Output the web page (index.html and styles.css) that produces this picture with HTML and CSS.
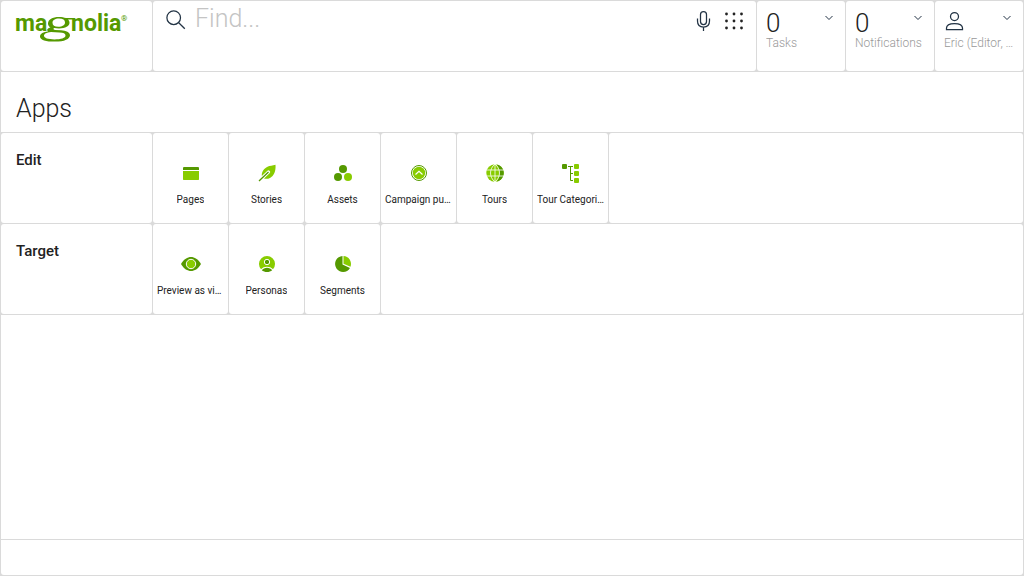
FILE: index.html
```html
<!DOCTYPE html>
<html lang="en">
<head>
<meta charset="utf-8">
<meta name="viewport" content="width=device-width, initial-scale=1">
<title>Magnolia</title>
<link rel="stylesheet" href="styles.css">
</head>
<body>
<div class="shell">
  <header class="topbar">
    <a class="cell logo" href="#" aria-label="Magnolia">
      <svg width="114" height="30" viewBox="0 0 114 30">
        <g class="logo-text">
          <text x="0" y="19">ma</text>
          <text x="56" y="19">nolia</text>
          <text class="logo-mark" x="106" y="9">®</text>
        </g>
        <path fill="#590" fill-rule="evenodd" d="M44 5c3 0 5 .5 7 1h7v1.500h-5c1 1 1.500 2 1.500 3.300 0 3.300-4 5.700-10.500 5.700-1.800 0-3.400-.2-4.700-.4-1.300.5-1.300 1.700.7 1.900l6 .2c5 .4 9 2.200 9 5 0 3.800-5.500 6.400-15 6.400-9 0-15-1.700-15-5.200 0-3 3.500-4.600 8-5-1.500-1.200-.8-3 2.500-3.800-1.600-1-2.500-2.300-2.500-4C33 7.500 37.500 5 44 5zM44 6.600c-4 0-6.500 1.600-6.500 4.200s2 4 5.800 4c4.200 0 6.700-1.600 6.700-4.200s-2-4-6-4zM36 20c-4.500.5-7 1.800-7 3.800 0 2.200 4 3.600 10.500 3.600 6.500 0 11-1.400 11-3.900 0-2-2-2.700-6-2.900z"/>
      </svg>
    </a>
    <form class="cell search" role="search">
      <svg class="icon-line" width="20" height="20" viewBox="0 0 20 20"><circle cx="7.700" cy="7.700" r="6.800"/><path d="M12.500 12.500l6.300 6.300"/></svg>
      <input class="search-input" type="text" placeholder="Find..." aria-label="Find">
      <button class="icon-button" type="button" aria-label="Voice search">
        <svg class="icon-line" width="16" height="22" viewBox="0 0 16 22"><rect x="4.500" y="1.500" width="6" height="13" rx="3"/><path d="M1.500 8.500v2.500c0 4 2.500 6 6 6s6-2 6-6V8.500M7.500 17v4"/></svg>
      </button>
      <button class="icon-button" type="button" aria-label="All apps">
        <svg width="20" height="20" viewBox="0 0 20 20" fill="#222"><circle cx="2.500" cy="3" r="1.400"/><circle cx="10" cy="3" r="1.400"/><circle cx="17.500" cy="3" r="1.400"/><circle cx="2.500" cy="10" r="1.400"/><circle cx="10" cy="10" r="1.400"/><circle cx="17.500" cy="10" r="1.400"/><circle cx="2.500" cy="17" r="1.400"/><circle cx="10" cy="17" r="1.400"/><circle cx="17.500" cy="17" r="1.400"/></svg>
      </button>
    </form>
    <button class="cell status" type="button">
      <span class="status-top"><span class="count">0</span><svg class="icon-line chevron" width="8" height="6" viewBox="0 0 8 6"><path d="M.5 1L4 4.500 7.500 1"/></svg></span>
      <span class="status-label">Tasks</span>
    </button>
    <button class="cell status" type="button">
      <span class="status-top"><span class="count">0</span><svg class="icon-line chevron" width="8" height="6" viewBox="0 0 8 6"><path d="M.5 1L4 4.500 7.500 1"/></svg></span>
      <span class="status-label">Notifications</span>
    </button>
    <button class="cell status" type="button">
      <span class="status-top"><svg class="icon-line user" width="20" height="20" viewBox="0 0 20 20"><circle cx="10.500" cy="5.500" r="4"/><path d="M2.500 18.500v-1.500c0-3 3.500-4.500 8-4.500s8 1.500 8 4.500v1.500z"/></svg><svg class="icon-line chevron" width="8" height="6" viewBox="0 0 8 6"><path d="M.5 1L4 4.500 7.500 1"/></svg></span>
      <span class="status-label">Eric (Editor, Publisher)</span>
    </button>
  </header>

  <h1 class="title">Apps</h1>

  <section class="group">
    <h2 class="cell group-name">Edit</h2>
    <a class="cell tile" href="#">
      <svg width="20" height="20" viewBox="0 0 20 20"><path fill="#590" d="M2.500 4h15l.5.500V7H2V4.500z"/><path fill="#8c0" d="M2 8h16v8.500l-.5.500h-15l-.5-.500z"/></svg>
      <span class="tile-name">Pages</span>
    </a>
    <a class="cell tile" href="#">
      <svg width="20" height="20" viewBox="0 0 20 20"><path fill="#8c0" d="M18.500 1.800C19 8 17 13 13 15c-3 1.500-6 .8-7.500-.2C3.500 11 6 6 10 4c3-1.500 5.500-1.200 8.500-2.200z"/><path fill="none" stroke="#fff" stroke-width="3.200" stroke-linecap="round" d="M2 18L11.500 9"/><path fill="none" stroke="#590" stroke-width="1.300" d="M2 18L11.500 9"/></svg>
      <span class="tile-name">Stories</span>
    </a>
    <a class="cell tile" href="#">
      <svg width="20" height="20" viewBox="0 0 20 20"><circle cx="10" cy="6" r="4" fill="#590"/><circle cx="5" cy="14" r="4" fill="#590"/><circle cx="15" cy="14" r="4" fill="#8c0"/></svg>
      <span class="tile-name">Assets</span>
    </a>
    <a class="cell tile" href="#">
      <svg width="20" height="20" viewBox="0 0 20 20"><circle cx="10" cy="10" r="7.500" fill="none" stroke="#590"/><circle cx="10" cy="10" r="6.200" fill="#8c0"/><path fill="none" stroke="#fff" stroke-width="1.200" d="M6.500 11.500L10 8.300l3.500 3.200"/></svg>
      <span class="tile-name">Campaign publisher</span>
    </a>
    <a class="cell tile" href="#">
      <svg width="20" height="20" viewBox="0 0 20 20"><circle cx="10" cy="10" r="8.700" fill="#8c0"/><path fill="#590" d="M12 1.500c9 2 9 15 0 17 3.500-5 3.500-12 0-17z"/><path fill="none" stroke="#fff" stroke-width=".8" d="M1 7h18M1 13h18M10 1v18M10 1C4 6 4 14 10 19M10 1c6 5 6 13 0 18"/></svg>
      <span class="tile-name">Tours</span>
    </a>
    <a class="cell tile" href="#">
      <svg width="20" height="20" viewBox="0 0 20 20"><rect x="1" y="1" width="5" height="5" rx="1" fill="#590"/><path fill="none" stroke="#590" d="M7 3.500h5M9.500 3.500v14H12M9.500 10.500H12"/><g fill="#8c0"><rect x="13" y="1" width="5" height="5" rx="1"/><rect x="13" y="8" width="5" height="5" rx="1"/><rect x="13" y="15" width="5" height="5" rx="1"/></g></svg>
      <span class="tile-name">Tour Categories</span>
    </a>
    <div class="cell filler"></div>
  </section>

  <section class="group">
    <h2 class="cell group-name">Target</h2>
    <a class="cell tile" href="#">
      <svg width="20" height="20" viewBox="0 0 20 20"><path fill="#590" d="M0 10c3-5 6.500-7 10-7s7 2 10 7c-3 5-6.500 7-10 7s-7-2-10-7z"/><circle cx="10" cy="10" r="4.700" fill="#8c0" stroke="#fff"/></svg>
      <span class="tile-name">Preview as visitor</span>
    </a>
    <a class="cell tile" href="#">
      <svg width="20" height="20" viewBox="0 0 20 20"><path fill="#8c0" d="M4 15.300a8 8 0 1 1 12 0C13 12 7 12 4 15.300z"/><path fill="#590" d="M4.800 16.200C7 12.800 13 12.800 15.200 16.200 12.500 18.600 7.500 18.600 4.800 16.200z"/><circle cx="10" cy="8" r="2.700" fill="#590" stroke="#fff"/></svg>
      <span class="tile-name">Personas</span>
    </a>
    <a class="cell tile" href="#">
      <svg width="20" height="20" viewBox="0 0 20 20"><path fill="#590" d="M9.500 2v8.500l7.500 3.500A8 8 0 1 1 9.500 2z"/><path fill="#8c0" d="M10.500 2a8 8 0 0 1 7 10.700l-7-3z"/></svg>
      <span class="tile-name">Segments</span>
    </a>
    <div class="cell filler"></div>
  </section>

  <main class="workspace"></main>
  <footer class="bottom"></footer>
</div>
</body>
</html>
```
FILE: styles.css
```css
* {
  box-sizing: border-box;
}

body {
  margin: 0;
  font-family: Roboto, "Liberation Sans", sans-serif;
  color: #222;
}

.shell {
  display: flex;
  flex-direction: column;
  gap: 1px;
  min-height: 100vh;
  padding: 1px;
  background: #dadada;
}

.cell {
  background: #fff;
  border: 0;
  border-radius: 3px;
}

.topbar {
  display: grid;
  grid-template-columns: 151px 1fr 88px 88px 88px;
  gap: 1px;
  min-height: 70px;
}

.logo {
  padding: 11px 14px;
}

.logo svg {
  display: block;
  overflow: visible;
}

.logo-text {
  fill: #590;
  font-size: 23px;
  font-weight: 700;
}

.logo-mark {
  font-size: 8px;
  font-weight: 400;
}

.icon-line {
  display: block;
  flex: none;
  fill: none;
  stroke: #234;
  stroke-width: 1.25;
}

.search {
  display: flex;
  align-items: flex-start;
  gap: 12px;
  padding: 9px 12px 9px 13px;
}

.search-input {
  flex: 1;
  min-width: 0;
  height: 30px;
  margin: -6px 0 0 -3px;
  padding: 0;
  border: 0;
  outline: 0;
  font: 300 25px/30px Roboto, "Liberation Sans", sans-serif;
}

.search-input::placeholder {
  color: #c4c4c4;
}

.icon-button {
  display: flex;
  align-items: center;
  height: 22px;
  padding: 0;
  border: 0;
  background: none;
}

.status {
  display: flex;
  flex-direction: column;
  min-width: 0;
  padding: 6px 8px 6px 9px;
  font-family: inherit;
  color: #222;
  text-align: left;
}

.status-top {
  display: flex;
  justify-content: space-between;
  width: 100%;
  height: 28px;
  padding: 8px 4px 0 0;
}

.count {
  margin-top: -8px;
  font-size: 26px;
  font-weight: 300;
  line-height: 32px;
}

.user {
  margin-top: -4px;
}

.chevron {
  stroke-width: 1;
}

.status-label {
  width: 100%;
  overflow: hidden;
  font-size: 12px;
  font-weight: 300;
  line-height: 16px;
  color: #999;
  text-overflow: ellipsis;
  white-space: nowrap;
}

.title {
  margin: 0;
  padding: 21px 15px 7px;
  background: #fff;
  font-size: 25px;
  font-weight: 300;
  line-height: 32px;
}

.group {
  display: flex;
  gap: 1px;
  min-height: 90px;
}

.group-name {
  width: 151px;
  margin: 0;
  padding: 17px 15px;
  font-size: 15px;
  font-weight: 500;
  line-height: 20px;
}

.tile {
  display: flex;
  flex-direction: column;
  align-items: center;
  gap: 9px;
  width: 75px;
  padding: 30px 4px 15px;
  color: #222;
  text-decoration: none;
}

.tile svg {
  display: block;
  flex: none;
}

.tile-name {
  max-width: 100%;
  overflow: hidden;
  font-size: 10px;
  line-height: 16px;
  text-overflow: ellipsis;
  white-space: nowrap;
}

.filler {
  flex: 1;
}

.workspace {
  flex: 1;
  background: #fff;
}

.bottom {
  min-height: 35px;
  background: #fff;
  border-radius: 0 0 3px 3px;
}
```
